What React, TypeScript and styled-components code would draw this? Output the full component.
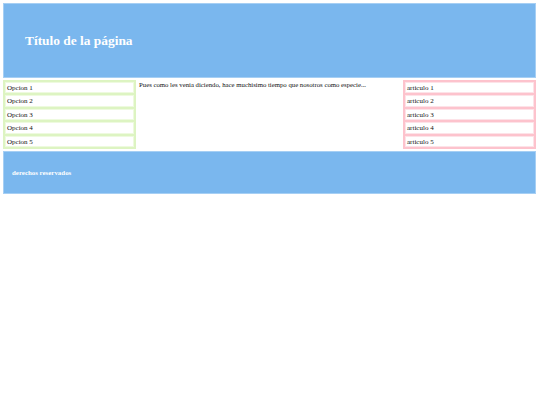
import React from 'react';
import styled, { createGlobalStyle } from 'styled-components';

const colors = {
  blue: '#7ab7ee',
  blueEdge: '#a6cff4',
  green: '#ddf4c2',
  greenLight: '#eefadf',
  pink: '#fdc3cd',
  pinkLight: '#fde3e8',
  white: '#ffffff',
  text: '#111111',
};

const GlobalStyle = createGlobalStyle`
  html, body {
    margin: 0;
    padding: 0;
    background: ${colors.white};
  }
  body {
    padding: 3px;
    font-family: "Liberation Serif", "Times New Roman", serif;
    color: ${colors.text};
  }
`;

const Page = styled.div`
  width: 533px;
  display: flex;
  flex-direction: column;
  gap: 2px;
`;

const Header = styled.header`
  height: 75px;
  background: ${colors.blue};
  box-shadow: inset 0 0 0 1px ${colors.blueEdge};
  display: flex;
  align-items: center;
  padding-left: 22px;
  box-sizing: border-box;
`;

const Title = styled.h1`
  margin: 0;
  font-size: 13.4px;
  font-weight: bold;
  color: ${colors.white};
`;

const Main = styled.div`
  display: grid;
  grid-template-columns: 133px 1fr 133px;
  column-gap: 3px;
  align-items: start;
`;

const List = styled.ul<{ $tone: 'green' | 'pink' }>`
  list-style: none;
  margin: 0;
  padding: 2px;
  display: flex;
  flex-direction: column;
  gap: 2px;
  background: ${p => (p.$tone === 'green' ? colors.green : colors.pink)};
`;

const Item = styled.li<{ $tone: 'green' | 'pink' }>`
  height: 11.4px;
  line-height: 10px;
  font-size: 7px;
  padding-left: 1px;
  background: ${colors.white};
  border: 1px solid ${p => (p.$tone === 'green' ? colors.greenLight : colors.pinkLight)};
  box-sizing: border-box;
`;

const Content = styled.section`
  font-size: 6.75px;
  padding-top: 1px;
  line-height: 8px;
  white-space: nowrap;
`;

const Footer = styled.footer`
  height: 43px;
  background: ${colors.blue};
  box-shadow: inset 0 0 0 1px ${colors.blueEdge};
  display: flex;
  align-items: center;
  padding-left: 9px;
  box-sizing: border-box;
`;

const FooterText = styled.p`
  margin: 0;
  font-size: 6.9px;
  font-weight: bold;
  color: ${colors.white};
`;

const opciones = ['Opcion 1', 'Opcion 2', 'Opcion 3', 'Opcion 4', 'Opcion 5'];
const articulos = ['articulo 1', 'articulo 2', 'articulo 3', 'articulo 4', 'articulo 5'];

const App: React.FC = () => (
  <>
    <GlobalStyle />
    <Page>
      <Header>
        <Title>Título de la página</Title>
      </Header>
      <Main>
        <List $tone="green">
          {opciones.map(o => (
            <Item key={o} $tone="green">{o}</Item>
          ))}
        </List>
        <Content>
          Pues como les venia diciendo, hace muchisimo tiempo que nosotros como especie...
        </Content>
        <List $tone="pink">
          {articulos.map(a => (
            <Item key={a} $tone="pink">{a}</Item>
          ))}
        </List>
      </Main>
      <Footer>
        <FooterText>derechos reservados</FooterText>
      </Footer>
    </Page>
  </>
);

export default App;
